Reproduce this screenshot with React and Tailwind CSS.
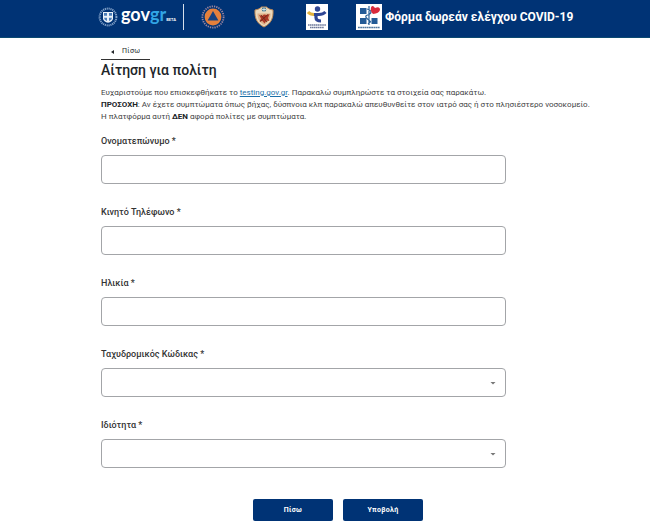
import React from 'react';

function GreekEmblem() {
  return (
    <svg viewBox="0 0 20 20" className="h-5 w-5 shrink-0" aria-hidden="true">
      <circle cx="10" cy="10" r="8.400" fill="none" stroke="#7f9fc6" strokeWidth="2" strokeDasharray="1.200 0.700" />
      <path d="M5 5h10v6.400c0 2.400-2.400 3.600-5 4.400c-2.600-.8-5-2-5-4.400z" fill="#e8f0f8" />
      <path d="M6 6h3v2.800H6zM11 6h3v2.800h-3zM6 10.800h3v3.200q-3-1-3-3.200zM11 10.800h3q0 2.200-3 3.200z" fill="#4b7db8" />
    </svg>
  );
}

function CivilProtection() {
  return (
    <svg viewBox="0 0 24 24" className="h-6 w-6 shrink-0" aria-hidden="true">
      <circle cx="12" cy="12" r="10.600" fill="none" stroke="#9a86a0" strokeWidth="1.800" strokeDasharray="1.300 1" />
      <circle cx="12" cy="12" r="8.400" fill="#e5803c" />
      <path d="M12 6l5.400 9.400h-10.800z" fill="#17417f" />
    </svg>
  );
}

function ArmyShield() {
  return (
    <svg viewBox="0 0 20 24" className="h-6 w-5 shrink-0" aria-hidden="true">
      <path d="M1 5c3-.5 5-1.500 6.500-3h5c1.500 1.500 3.500 2.500 6.500 3c.4 8-1.500 13-9 17c-7.500-4-9.400-9-9-17z" fill="#ead9bd" stroke="#c08a55" strokeWidth="1" />
      <path d="M3.500 8.500h13c0 5-1.500 8.500-6.500 11.500c-5-3-6.500-6.500-6.500-11.500z" fill="#dfb189" />
      <circle cx="10" cy="4.400" r="2.200" fill="#3c7590" />
      <path d="M9.600 2.500h.8v4h-.8zM8 4h4v.8H8z" fill="#eef3f5" />
      <path d="M5 10l3 1l2-1.500l2.500.5l3-1l-1.500 4l1.500 3l-3-.5l-2 3l-2-2.500l-3 .5l1.500-3z" fill="#ad3827" />
      <path d="M6 16.500l8-7M7 10l6 7" stroke="#69291c" strokeWidth="0.900" />
    </svg>
  );
}

function PublicHealthLogo() {
  return (
    <svg viewBox="0 0 22 26" className="h-[26px] w-[22px] shrink-0" aria-hidden="true">
      <path d="M0 0h22v26H0z" fill="#fff" />
      <circle cx="11.500" cy="5" r="2.700" fill="#2f4694" />
      <path d="M2 8q2 2.500 6 2.500" fill="none" stroke="#e3b23d" strokeWidth="3" />
      <path d="M8 10.500h5q4 0 6.500-2.500" fill="none" stroke="#2f4694" strokeWidth="3" />
      <path d="M10 10.500v3q0 3.500 5 3.500" fill="none" stroke="#2f4694" strokeWidth="3.200" />
      <path d="M2 21h18M4 23.500h14" stroke="#6d789a" strokeWidth="1.300" strokeDasharray="1.500 .4" />
    </svg>
  );
}

function HealthRegionLogo() {
  return (
    <svg viewBox="0 0 26 26" className="h-[26px] w-[26px] shrink-0" aria-hidden="true">
      <path d="M0 0h26v26H0z" fill="#fff" />
      <path d="M4 4h6.500v6H4zM4 14h6.500v6H4zM15.500 14h6v6h-6z" fill="#245b96" />
      <path d="M13 2v19M11 5q4 1 4 3t-3.500 3t0 4t3 3t-2.500 2" fill="none" stroke="#2c6399" strokeWidth="1.200" />
      <path d="M15 3.500q1.500-3 4 .5q5-2 5 2q-1 3.500-7 4q-3-3-2-6.500z" fill="#d92b3c" />
      <path d="M2 23.500h22" stroke="#50789f" strokeWidth="1.400" strokeDasharray="1.800 .4" />
    </svg>
  );
}

function Field({ id, label, select }) {
  const box = 'block h-[29px] w-full rounded border border-[#a3a5a8] bg-white px-3 text-[10px] text-[#212529]';
  return (
    <div>
      <label htmlFor={id} className="block pb-2 text-[9px] leading-3 font-medium text-[#333]">{label} *</label>
      {select ? (
        <div className="relative">
          <select id={id} className={box + ' appearance-none'} defaultValue=""><option value=""></option></select>
          <svg viewBox="0 0 6 3" className="pointer-events-none absolute right-2.5 top-3.5 h-[3px] w-1.5" aria-hidden="true">
            <path d="M0.500 0h5L3 2.500z" fill="#777" />
          </svg>
        </div>
      ) : (
        <input id={id} type="text" className={box} />
      )}
    </div>
  );
}

export default function App() {
  return (
    <div className="bg-white font-['Roboto','Noto_Sans',sans-serif] text-[#212529]">
      <header className="flex h-[38px] items-center border-b border-[#0b4a72] bg-[#003375] pb-1 pl-[98px] text-white">
        <a href="#" aria-label="govgr" className="flex w-[79px] items-center gap-[3px]">
          <GreekEmblem />
          <span className="flex items-baseline font-['Lato',sans-serif] leading-5">
            <span className="text-lg leading-5 font-bold">gov</span>
            <span className="text-lg leading-5 font-bold text-[#32a5e5]">gr</span>
            <span className="text-[4px] font-bold">BETA</span>
          </span>
        </a>
        <div className="ml-1.5 h-[26px] w-px bg-[#d5dfeb]" />
        <div className="ml-[17px] flex items-center">
          <CivilProtection />
          <div className="ml-[29px] flex"><ArmyShield /></div>
          <div className="ml-8 flex"><PublicHealthLogo /></div>
          <div className="ml-7 flex"><HealthRegionLogo /></div>
        </div>
        <span className="ml-[3px] text-xs font-bold whitespace-nowrap">Φόρμα δωρεάν ελέγχου COVID-19</span>
      </header>

      <main className="pt-1.5 pr-10 pl-[101px]">
        <a href="#" className="flex h-4 w-[49px] items-center gap-2 border-b border-[#333] pl-2.5 text-[7px] tracking-wider">
          <svg viewBox="0 0 3 4" className="h-1 w-[3px]" aria-hidden="true"><path d="M3 0v4L0 2z" fill="#212529" /></svg>
          Πίσω
        </a>
        <h1 className="text-sm leading-5 font-medium">Αίτηση για πολίτη</h1>
        <p className="pt-[7px] text-[8px] leading-3 whitespace-nowrap text-[#444]">
          Ευχαριστούμε που επισκεφθήκατε το <a href="#" className="text-[#1d70a8] underline">testing.gov.gr</a>. Παρακαλώ συμπληρώστε τα στοιχεία σας παρακάτω.<br />
          <strong className="font-bold text-[#212529]">ΠΡΟΣΟΧΗ</strong>: Αν έχετε συμπτώματα όπως βήχας, δύσπνοια κλπ παρακαλώ απευθυνθείτε στον ιατρό σας ή στο πλησιέστερο νοσοκομείο.<br />
          Η πλατφόρμα αυτή <strong className="font-bold text-[#212529]">ΔΕΝ</strong> αφορά πολίτες με συμπτώματα.
        </p>
        <form className="pt-3">
          <div className="flex max-w-[405px] flex-col gap-[22px]">
            <Field id="name" label="Ονοματεπώνυμο" />
            <Field id="phone" label="Κινητό Τηλέφωνο" />
            <Field id="age" label="Ηλικία" />
            <Field id="postcode" label="Ταχυδρομικός Κώδικας" select />
            <Field id="capacity" label="Ιδιότητα" select />
          </div>
          <div className="flex gap-2.5 pt-[31px] pl-38 text-[7px] font-bold text-white">
            <button type="button" className="h-[22px] w-20 rounded-xs bg-[#003375] tracking-wider">Πίσω</button>
            <button type="submit" className="h-[22px] w-20 rounded-xs bg-[#003375] tracking-wider">Υποβολή</button>
          </div>
        </form>
      </main>
    </div>
  );
}
